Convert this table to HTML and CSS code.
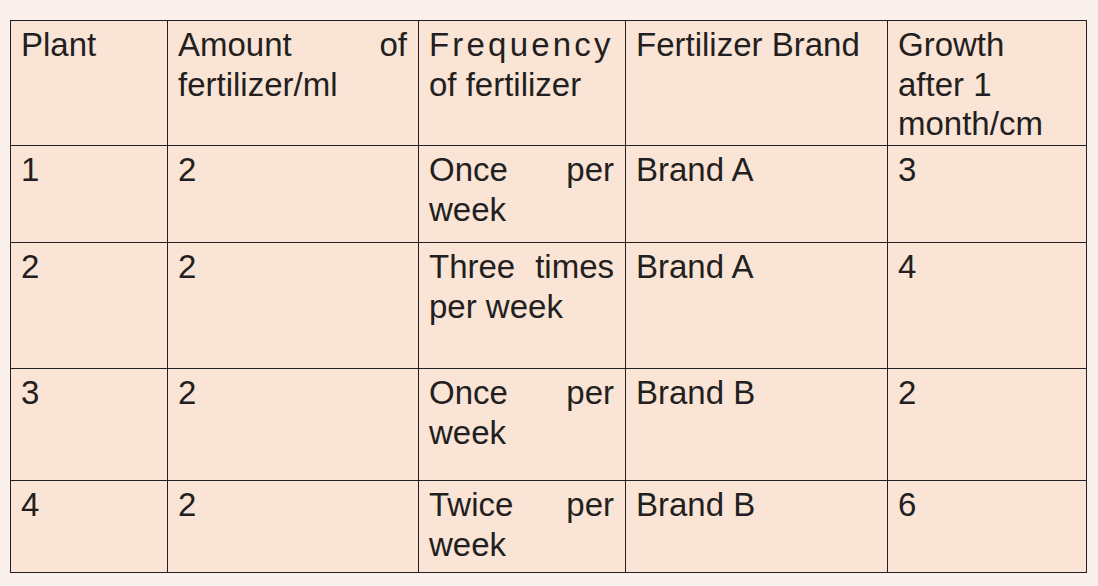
FILE: index.html
```html
<!DOCTYPE html>
<html>
<head>
<meta charset="utf-8">
<link rel="stylesheet" href="styles.css">
</head>
<body>
<table class="data">
  <colgroup>
    <col class="c1"><col class="c2"><col class="c3"><col class="c4"><col class="c5">
  </colgroup>
  <tr class="r0">
    <td>Plant</td>
    <td>Amount of fertilizer/ml</td>
    <td><span class="spread">Frequency</span> of fertilizer</td>
    <td>Fertilizer Brand</td>
    <td class="left">Growth after 1 month/cm</td>
  </tr>
  <tr class="r1">
    <td>1</td><td>2</td><td>Once per week</td><td>Brand A</td><td>3</td>
  </tr>
  <tr class="r2">
    <td>2</td><td>2</td><td>Three times per week</td><td>Brand A</td><td>4</td>
  </tr>
  <tr class="r3">
    <td>3</td><td>2</td><td>Once per week</td><td>Brand B</td><td>2</td>
  </tr>
  <tr class="r4">
    <td>4</td><td>2</td><td>Twice per week</td><td>Brand B</td><td>6</td>
  </tr>
</table>
</body>
</html>
```
FILE: styles.css
```css
html, body {
  margin: 0;
  padding: 0;
  background: #fbf1ec;
}
body {
  padding: 20px 0 0 10px;
}
.data {
  border-collapse: collapse;
  table-layout: fixed;
  width: 1076px;
  background: #f9e4d6;
  font-family: "Liberation Sans", Arial, sans-serif;
  font-size: 33px;
  line-height: 39.5px;
  color: #231f20;
}
.c1 { width: 157px; }
.c2 { width: 251px; }
.c3 { width: 207px; }
.c4 { width: 262px; }
.c5 { width: 199px; }
.data td {
  border: 1px solid #231f20;
  vertical-align: top;
  padding: 4px 11px 0 10px;
  text-align: justify;
}
.data td.left {
  text-align: left;
}
.r0 { height: 125px; }
.r1 { height: 97px; }
.r2 { height: 126px; }
.r3 { height: 112px; }
.r4 { height: 92px; }
.spread {
  letter-spacing: 3.2px;
}
```
